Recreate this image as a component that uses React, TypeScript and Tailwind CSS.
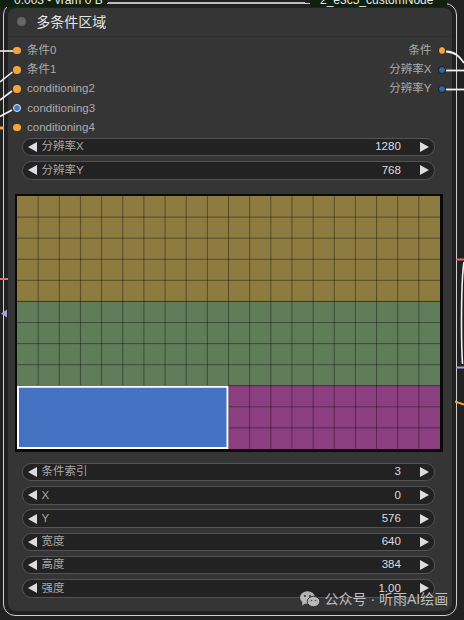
import React from "react";

const FONT = "font-[family-name:'Liberation_Sans','Noto_Sans_CJK_SC',sans-serif]";

function LeftArrow() {
  return (
    <svg width="9" height="10" viewBox="0 0 9 10" className="shrink-0">
      <polygon points="9,0 9,10 0,5" fill="#dcdcdc" />
    </svg>
  );
}
function RightArrow() {
  return (
    <svg width="9" height="10" viewBox="0 0 9 10" className="shrink-0">
      <polygon points="0,0 9,5 0,10" fill="#dcdcdc" />
    </svg>
  );
}

function Widget({ label, value }: { label: string; value: string }) {
  return (
    <div className="flex items-center h-[18.5px] rounded-full bg-[#222222] border border-[#535353] pl-[5.3px] pr-[5px] text-[11.5px] leading-none">
      <LeftArrow />
      <span className="ml-[4.7px] text-[#a8a8a8]">{label}</span>
      <span className="ml-auto text-[#dedede]">{value}</span>
      <span className="ml-[18.7px] flex">
        <RightArrow />
      </span>
    </div>
  );
}

function InSlot({ label, color, ring }: { label: string; color: string; ring?: boolean }) {
  return (
    <div className="flex items-center h-[19.25px]">
      <span
        className={
          ring
            ? "ml-[5.3px] w-[8px] h-[8px] rounded-full border-[1.5px] border-[#e8e8e8]"
            : "ml-[5.5px] w-[7.5px] h-[7.5px] rounded-full"
        }
        style={{ backgroundColor: color }}
      />
      <span className="ml-[6.5px] text-[11.5px] text-[#acacac] leading-none">{label}</span>
    </div>
  );
}

function OutSlot({ label, color, dark }: { label: string; color: string; dark?: boolean }) {
  return (
    <div className="flex items-center justify-end h-[19.25px]">
      <span className="text-[11.5px] text-[#acacac] leading-none">{label}</span>
      <span
        className={
          dark
            ? "ml-[6px] mr-[5.5px] w-[8.5px] h-[8.5px] rounded-full border border-[#1b1b1b]"
            : "ml-[6px] mr-[6px] w-[7.5px] h-[7.5px] rounded-full"
        }
        style={{ backgroundColor: color }}
      />
    </div>
  );
}

function AreaCanvas() {
  const vLines = Array.from({ length: 19 }, (_, i) => (i + 1) * 64);
  const hLines = Array.from({ length: 11 }, (_, i) => (i + 1) * 64);
  return (
    <svg width="423" height="253" viewBox="0 0 1280 768" preserveAspectRatio="none" className="block">
      <rect x="0" y="0" width="1280" height="320" fill="#8d7b40" />
      <rect x="0" y="320" width="1280" height="256" fill="#5e7d58" />
      <rect x="640" y="576" width="640" height="192" fill="#8c3f80" />
      {vLines.map((x) => (
        <line key={"v" + x} x1={x} y1={0} x2={x} y2={768} stroke="#000" strokeOpacity="0.38" strokeWidth="1" vectorEffect="non-scaling-stroke" />
      ))}
      {hLines.map((y) => (
        <line key={"h" + y} x1={0} y1={y} x2={1280} y2={y} stroke="#000" strokeOpacity="0.38" strokeWidth="1" vectorEffect="non-scaling-stroke" />
      ))}
      <rect x="3" y="579" width="634" height="186" fill="#4373c2" stroke="#ffffff" strokeWidth="2" vectorEffect="non-scaling-stroke" />
    </svg>
  );
}

export default function App() {
  return (
    <div className={`relative w-[464px] h-[620px] overflow-hidden bg-[#212121] ${FONT}`}>
      {/* node with selection outline */}
      <div className="ml-[2.5px] mt-[2.5px] w-[454px] h-[613px] rounded-[12px] border-[1.5px] border-[#cfcfcf] p-[4px]">
        <div className="h-full rounded-[8px] bg-[#353535] flex flex-col">
          {/* title */}
          <div className="h-[29px] flex items-center border-b border-[#303030] shrink-0">
            <span className="ml-[9.3px] w-[9.4px] h-[9.4px] rounded-full bg-[#666666]" />
            <span className="ml-[10px] text-[14px] text-[#e4e4e4] leading-none">多条件区域</span>
          </div>
          {/* slots */}
          <div className="flex justify-between pt-[4.4px]">
            <div className="flex flex-col">
              <InSlot label="条件0" color="#f7a53b" />
              <InSlot label="条件1" color="#f7a53b" />
              <InSlot label="conditioning2" color="#f7a53b" />
              <InSlot label="conditioning3" color="#3d7cd1" ring />
              <InSlot label="conditioning4" color="#f7a53b" />
            </div>
            <div className="flex flex-col">
              <OutSlot label="条件" color="#f7a53b" dark />
              <OutSlot label="分辨率X" color="#2d6aa6" dark />
              <OutSlot label="分辨率Y" color="#2d6aa6" dark />
            </div>
          </div>
          {/* resolution widgets */}
          <div className="ml-[14px] w-[413px] mt-[0.6px] flex flex-col gap-[4.8px]">
            <Widget label="分辨率X" value="1280" />
            <Widget label="分辨率Y" value="768" />
          </div>
          {/* area canvas */}
          <div className="ml-[7px] mt-[14.9px] w-[428px] h-[258px] border-[2.5px] border-[#0a0a0a] bg-[#0a0a0a]">
            <AreaCanvas />
          </div>
          {/* area widgets */}
          <div className="ml-[14px] w-[413px] mt-[10.3px] flex flex-col gap-[4.8px]">
            <Widget label="条件索引" value="3" />
            <Widget label="X" value="0" />
            <Widget label="Y" value="576" />
            <Widget label="宽度" value="640" />
            <Widget label="高度" value="384" />
            <Widget label="强度" value="1.00" />
          </div>
        </div>
      </div>

      {/* bottom of the node above (canvas window) */}
      <div className="absolute left-0 top-0 w-[107px] h-[6.5px] overflow-hidden bg-[#10200f] rounded-br-[3px]">
        <div className="ml-[14px] -mt-[7px] text-[12px] leading-[14px] text-[#e8e8e8] whitespace-nowrap">0.003 - vram 0 B</div>
      </div>
      <div className="absolute left-[108px] top-[2px] w-[197px] h-[1.5px] bg-[#bdbdbd]" />
      <div className="absolute left-[310px] top-0 w-[137px] h-[6.5px] overflow-hidden bg-[#10200f] rounded-b-[3px]">
        <div className="ml-[10px] -mt-[7px] text-[12px] leading-[14px] text-[#e8e8e8] whitespace-nowrap">2_e3c5_customNode</div>
      </div>

      {/* wires and canvas decorations */}
      <svg className="absolute left-0 top-0 pointer-events-none" width="464" height="620" viewBox="0 0 464 620">
        <line x1="0" y1="51" x2="13" y2="51" stroke="#f2f2f2" strokeWidth="1.6" />
        <line x1="0" y1="82" x2="12.5" y2="72" stroke="#f2f2f2" strokeWidth="1.6" />
        <line x1="0" y1="100" x2="12" y2="91" stroke="#f2f2f2" strokeWidth="1.6" />
        <line x1="0" y1="116.5" x2="12" y2="110" stroke="#f2f2f2" strokeWidth="1.6" />
        <line x1="0" y1="128" x2="4" y2="128" stroke="#f7a53b" strokeWidth="3" />
        <line x1="0" y1="279" x2="8" y2="279" stroke="#e56b78" strokeWidth="2" />
        <polygon points="1,313.5 7,309.5 7,317.5" fill="#a9a0dc" />
        <path d="M446,51.5 C455,52 459,56 464,63" stroke="#f2f2f2" strokeWidth="1.8" fill="none" />
        <line x1="446" y1="70.5" x2="464" y2="70.5" stroke="#f2f2f2" strokeWidth="1.8" />
        <line x1="446" y1="89.5" x2="464" y2="89.5" stroke="#f2f2f2" strokeWidth="1.8" />
        <line x1="456" y1="259.5" x2="464" y2="259.5" stroke="#e56b78" strokeWidth="2" />
        <path d="M464,262 C461,280 461,340 462.5,364" stroke="#f2f2f2" strokeWidth="1.6" fill="none" />
        <line x1="456" y1="367.5" x2="464" y2="367.5" stroke="#a9a0dc" strokeWidth="2" />
        <line x1="455" y1="401.5" x2="464" y2="404.5" stroke="#f0a534" strokeWidth="2" />
      </svg>

      {/* watermark */}
      <div className="absolute left-[300px] top-[591px] flex items-center">
        <svg width="20" height="16" viewBox="0 0 20 16" className="opacity-80">
          <ellipse cx="7.5" cy="6.5" rx="7.5" ry="6.3" fill="#d8d8d8" />
          <polygon points="2.5,10.5 2,14.5 6,12" fill="#d8d8d8" />
          <ellipse cx="13.5" cy="10.5" rx="6.3" ry="5.2" fill="#d8d8d8" stroke="#333" strokeWidth="1" />
          <circle cx="5" cy="5" r="1" fill="#333" />
          <circle cx="10" cy="5" r="1" fill="#333" />
          <circle cx="11.5" cy="9.5" r="0.8" fill="#555" />
          <circle cx="15.5" cy="9.5" r="0.8" fill="#555" />
        </svg>
        <span className="ml-[4.5px] text-[14px] leading-none text-[#d6d6d6] opacity-85 whitespace-nowrap">公众号 · 听雨AI绘画</span>
      </div>
    </div>
  );
}
